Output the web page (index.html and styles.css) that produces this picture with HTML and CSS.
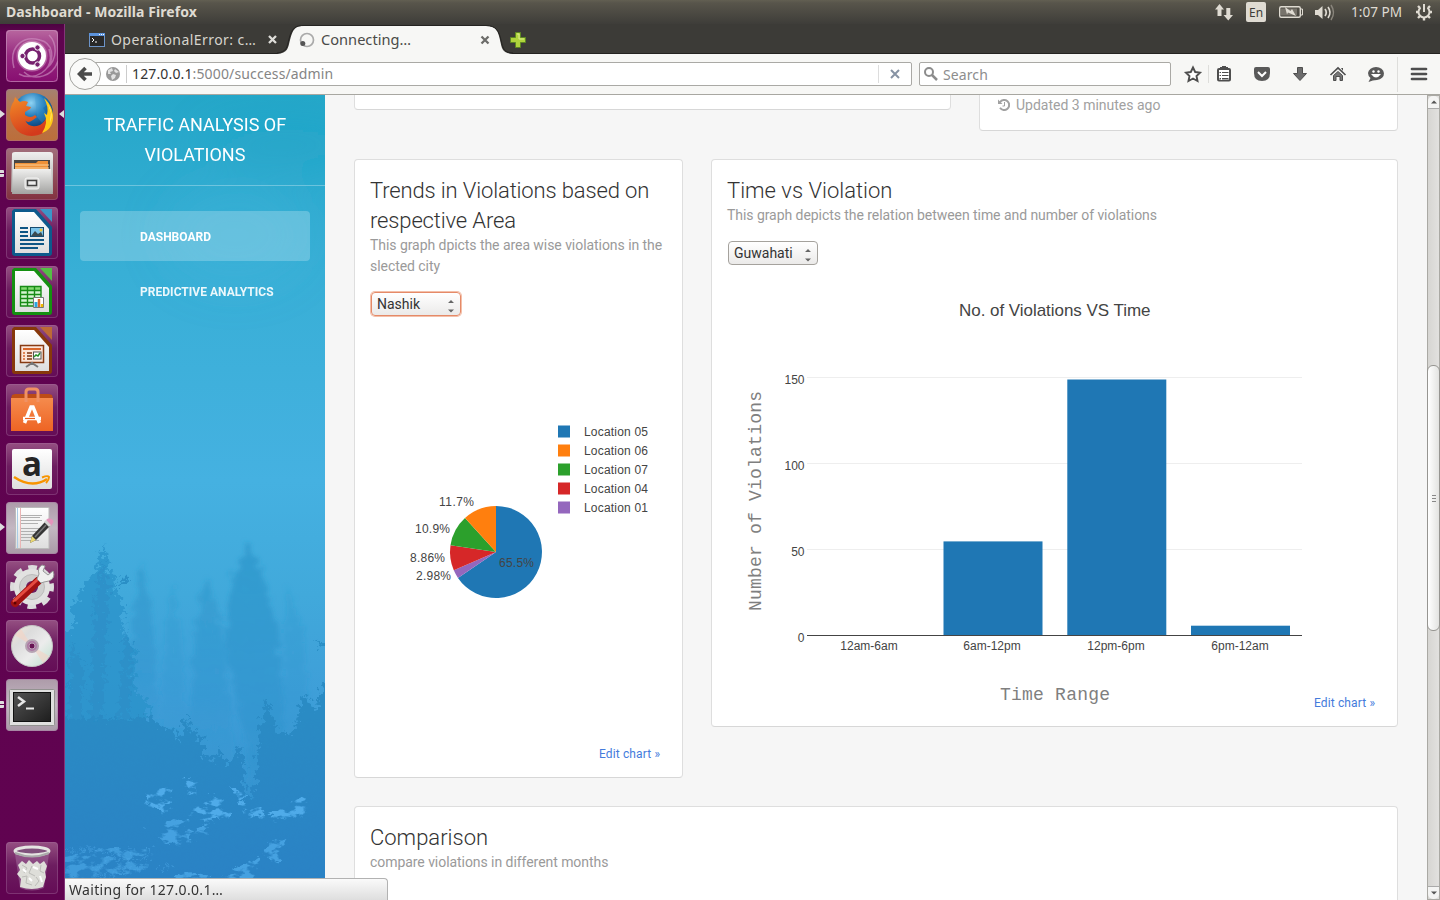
FILE: index.html
```html
<!DOCTYPE html>
<html lang="en">
<head>
<meta charset="utf-8">
<title>Dashboard - Mozilla Firefox</title>
<link rel="stylesheet" href="styles.css">
</head>
<body>
<svg class="defs" width="0" height="0" aria-hidden="true">
  <defs>
    <linearGradient id="silver" x1="0" y1="0" x2="0" y2="1"><stop offset="0" stop-color="#efefee"/><stop offset="1" stop-color="#a3a3a1"/></linearGradient>
    <linearGradient id="paper" x1="0" y1="0" x2="0" y2="1"><stop offset="0" stop-color="#fff"/><stop offset="1" stop-color="#dedede"/></linearGradient>
    <linearGradient id="orange" x1="0" y1="0" x2="0" y2="1"><stop offset="0" stop-color="#f58b4d"/><stop offset="1" stop-color="#ee6424"/></linearGradient>
    <linearGradient id="screen" x1="0" y1="0" x2="1" y2="1"><stop offset="0" stop-color="#535353"/><stop offset="1" stop-color="#1e1e1e"/></linearGradient>
    <radialGradient id="globe" cx=".45" cy=".25" r=".75"><stop offset="0" stop-color="#8fd4f4"/><stop offset=".45" stop-color="#2079b9"/><stop offset="1" stop-color="#062a60"/></radialGradient>
    <linearGradient id="fox" x1="0" y1="0" x2=".4" y2="1"><stop offset="0" stop-color="#f28c28"/><stop offset="1" stop-color="#d43a1c"/></linearGradient>
    <linearGradient id="swirl" x1="0" y1="0" x2="0" y2="1"><stop offset="0" stop-color="#b8669f"/><stop offset=".5" stop-color="#96287f"/><stop offset="1" stop-color="#870e70"/></linearGradient>
    <linearGradient id="disc" x1="0" y1="0" x2="1" y2="1"><stop offset="0" stop-color="#f5e7d6"/><stop offset=".3" stop-color="#dcdcdc"/><stop offset=".6" stop-color="#ececec"/><stop offset=".8" stop-color="#d3e6dc"/><stop offset="1" stop-color="#e5d8ea"/></linearGradient>
  </defs>
</svg>
<header class="panel">
  <span class="panel-title">Dashboard - Mozilla Firefox</span>
  <svg class="indicators" viewBox="1210 0 230 24" width="230" height="24">
    <g fill="#dfdbd2">
      <path d="M1215 9.500L1219.500 4L1224 9.500H1221.500V16H1217.500V9.500ZM1223.500 15H1226.300V8H1230.300V15H1233L1228.300 20.500Z"/>
      <rect x="1246" y="2" width="20" height="20" rx="2"/>
      <path d="M1281 8.500H1297V15.500H1281Z" fill="#77736b"/>
      <path d="M1285 7L1290.500 11L1292 9L1296 16L1288 12.500L1287 14.500Z"/>
      <rect x="1279.700" y="6.700" width="20.600" height="10.600" rx="1.500" fill="none" stroke="#dfdbd2" stroke-width="1.400"/>
      <path d="M1300.500 9H1302.500V15H1300.500" fill="none" stroke="#dfdbd2"/>
      <path d="M1315 10H1318L1322.500 6V19L1318 15H1315Z"/>
      <path d="M1325 9Q1327.500 12.500 1325 16M1328 7Q1332 12.500 1328 18" fill="none" stroke="#dfdbd2" stroke-width="1.700"/>
      <path d="M1331 5Q1336 12.500 1331 20" fill="none" stroke="#89857c" stroke-width="1.500"/>
      <text x="1249" y="17" class="ui" font-size="12" textLength="14" lengthAdjust="spacingAndGlyphs" fill="#3c3b37">En</text>
      <text x="1351" y="17" class="ui" font-size="14" textLength="51" lengthAdjust="spacingAndGlyphs">1:07 PM</text>
    </g>
    <g stroke="#dfdbd2" fill="none" stroke-width="2">
      <path d="M1420.500 7.800A5.500 5.500 0 1 0 1427.500 7.800M1424 4V12"/>
      <path d="M1418 6L1420 8M1430 6L1428 8M1416 12H1418.500M1429.500 12H1432M1418 18L1420.500 15.500M1430 18L1427.500 15.500M1424 17V20.500" stroke-width="2.400"/>
    </g>
  </svg>
</header>
<div class="desktop">
  <nav class="launcher">
    <a class="tile"><svg viewBox="0 0 52 52" width="52" height="52"><rect width="52" height="52" rx="4" fill="url(#swirl)"/><path d="M8 38C2 16 18 5 34 10C47 13 49 28 41 38C52 29 51 13 43 5M43 19C50 41 27 52 13 44M18 42C29 52 47 46 52 31" fill="none" stroke="#d196c5" stroke-width="1.500" opacity=".6"/><circle cx="26" cy="26" r="15.500" fill="#e9c6df" opacity=".4"/><circle cx="26" cy="26" r="14" fill="#fff"/><circle cx="26.500" cy="26" r="7" fill="none" stroke="#77216f" stroke-width="3.500"/><g fill="#77216f" stroke="#fff"><circle cx="16.500" cy="26" r="2.700"/><circle cx="31.500" cy="17.500" r="2.700"/><circle cx="31.500" cy="34.500" r="2.700"/></g><rect x=".5" y=".5" width="51" height="51" rx="4" fill="none" stroke="#c58bb9" opacity=".7"/></svg></a>
    <a class="tile tan run active"><svg viewBox="0 0 52 52" width="52" height="52"><circle cx="27" cy="24" r="20" fill="url(#globe)"/><path d="M29 8C34 6 40 10 42 15L37 19L42 27L36 34L31 28Z" fill="#3d9bd1" opacity=".35"/><path d="M42 15C46 23 46 29 44 36C38 49 18 51 9 39C2 30 3 19 8 12L9 8L14 13Q18 11 22 13L20 17L25 18L24 20L19 23V26Q25 30 29 26L31 28L27 31C23 34 20 33 19 31Q23 40 34 36C41 32 43 23 42 15Z" fill="url(#fox)"/><path d="M38 9C51 20 50 40 36 44Q43 33 38 24L41 26Q43 18 38 9Z" fill="#ffc917"/><path d="M42 15Q48 25 44 34L45 24Z" fill="#fff18c"/></svg></a>
    <a class="tile red run2"><svg viewBox="0 0 52 52" width="52" height="52"><path d="M6 6Q6 4 9 4H44Q47 4 47 7V44H5Z" fill="url(#silver)"/><rect x="8" y="12" width="36" height="12" fill="#4a4744"/><path d="M9 15H30L32 13H42V24H9Z" fill="#ee9138"/><path d="M9 17H43M9 20H43" stroke="#fbd199"/><path d="M7 21H45L47 46H6Z" fill="url(#silver)"/><rect x="19" y="30" width="14" height="11" rx="2" fill="#d9d9d7" stroke="#f5f5f5"/><rect x="21.500" y="32.500" width="9" height="5" fill="#ececec" stroke="#424242" stroke-width="1.500"/></svg></a>
    <a class="tile"><svg viewBox="0 0 52 52" width="52" height="52"><path d="M8 2H30L46 20V46Q46 49 43 49H9Q6 49 6 46V4Z" fill="#0d5a8c"/><path d="M34 2H46V15Z" fill="#3b96c8"/><path d="M9 5H28L43 22V46H9Z" fill="url(#paper)"/><path d="M14 21H22M14 25H22M14 29H22M14 33H38M14 37H38M14 41H32" stroke="#0e5584" stroke-width="2"/><rect x="24.500" y="20.500" width="13" height="9" fill="#7cc4ea" stroke="#174c70"/><path d="M25 29L29 24L32 27L35 25L37 29Z" fill="#3c4a50"/><circle cx="35" cy="23" r="1.500" fill="#f1c232"/></svg></a>
    <a class="tile"><svg viewBox="0 0 52 52" width="52" height="52"><path d="M8 2H30L46 20V46Q46 49 43 49H9Q6 49 6 46V4Z" fill="#159011"/><path d="M34 2H46V15Z" fill="#54bf45"/><path d="M9 5H28L43 22V46H9Z" fill="url(#paper)"/><path d="M14 20H35V40H14Z" fill="#d4f4d1"/><path d="M14 20H35V24H14Z" fill="#83da70"/><path d="M14.500 20.500H35V40H14.500ZM14 24.500H35M14 28.500H35M14 32.500H35M14 36.500H35M21.500 20V40M28.500 20V40" fill="none" stroke="#178b15" stroke-width="1.400"/><path d="M27.500 31.500H37.500V41.500H27.500Z" fill="#fff" stroke="#777"/><path d="M30 41V36" stroke="#29a6e0" stroke-width="3"/><path d="M33 41V33" stroke="#dd6628" stroke-width="2.500"/><path d="M36 41V38" stroke="#f1b900" stroke-width="2.500"/></svg></a>
    <a class="tile"><svg viewBox="0 0 52 52" width="52" height="52"><path d="M8 2H30L46 20V46Q46 49 43 49H9Q6 49 6 46V4Z" fill="#87380b"/><path d="M34 2H46V15Z" fill="#bd6a36"/><path d="M9 5H28L43 22V46H9Z" fill="url(#paper)"/><rect x="14.500" y="20.500" width="23" height="17" fill="#fbe5d9" stroke="#873b13" stroke-width="1.500"/><path d="M17 24H35" stroke="#d8662b" stroke-width="2"/><path d="M17 28H19M17 31H19M17 34H19" stroke="#d8662b" stroke-width="1.700"/><path d="M21 28H26M21 31H26M21 34H26" stroke="#7c3310" stroke-width="1.700"/><rect x="27.500" y="27" width="7.500" height="7" fill="#fff" stroke="#555"/><path d="M28 32L30 30L32 31L34 28" fill="none" stroke="#25922a" stroke-width="1.500"/><path d="M20 42L26 38L32 42M26 37V40" fill="none" stroke="#777" stroke-width="2"/></svg></a>
    <a class="tile"><svg viewBox="0 0 52 52" width="52" height="52"><path d="M6 11L9 10H43L46 11L47 15H5Z" fill="#bd4c16"/><path d="M5 14H47V47H5Z" fill="url(#orange)"/><path d="M20 18V8Q20 5 23 5H29Q32 5 32 8V18" fill="none" stroke="#f09164" stroke-width="3"/><path d="M18.500 39L25 23H27L33.500 39M17 34.500H35" fill="none" stroke="#fff" stroke-width="3.500"/><path d="M19 34.500H29" stroke="#eb5f1f" stroke-width="1.200"/></svg></a>
    <a class="tile"><svg viewBox="0 0 52 52" width="52" height="52"><rect x="6" y="6" width="40" height="40" rx="2" fill="url(#paper)"/><text x="16" y="33" class="amazon" textLength="20" lengthAdjust="spacingAndGlyphs">a</text><path d="M8 34Q26 46 41 36" fill="none" stroke="#f79400" stroke-width="2.500"/><path d="M36 34.500Q42 32 43 34Q43 37 40 40" fill="none" stroke="#f79400" stroke-width="2"/></svg></a>
    <a class="tile gray run"><svg viewBox="0 0 52 52" width="52" height="52"><path d="M9.500 5.500H43V46.500H9.500Z" fill="url(#paper)" stroke="#bbb"/><path d="M15 13.500H36M15 15.500H34M15 18.500H36M15 21.500H32M15 26.500H36M15 29.500H32M15 32.500H34M15 35.500H30M15 38.500H33" stroke="#b0b0b0"/><path d="M11.500 6V46" stroke="#a9cce5"/><path d="M14.500 6V46" stroke="#eab5b5"/><path d="M24 41L26 34L39 20L44 24L30 38Z" fill="#353535"/><path d="M40 18L42 16.500Q47 16 47.500 20L45 24Z" fill="#e594bd"/><path d="M38 20L40 18L45 23L43 25Z" fill="#d4d4d4"/><path d="M24 41L26 34L30 38Z" fill="#ead773"/><path d="M29 35L40 23" stroke="#777" stroke-width="1.500"/></svg></a>
    <a class="tile"><svg viewBox="0 0 52 52" width="52" height="52"><circle cx="26" cy="26" r="19" fill="none" stroke="#dcdcdc" stroke-width="6" stroke-dasharray="8.500 6.420" stroke-dashoffset="4.250"/><circle cx="26" cy="26" r="11.500" fill="none" stroke="#e2e2e1" stroke-width="13"/><circle cx="26" cy="26" r="12.500" fill="#cfcfce" stroke="#bbb"/><circle cx="26" cy="26" r="6" fill="#6d1d60"/><path d="M9 42L32 20" stroke="#a11111" stroke-width="8" stroke-linecap="round"/><path d="M8 40L31 19" stroke="#e54b40" stroke-width="3" stroke-linecap="round"/><path d="M31 18L33 13Q31 7 36 4L39 5L37 10L42 14L47 10Q50 17 43 20L38 21L35 22Z" fill="#f0f0ef" stroke="#999"/><circle cx="9" cy="42" r="1.500" fill="#5c0000"/></svg></a>
    <a class="tile"><svg viewBox="0 0 52 52" width="52" height="52"><circle cx="26" cy="26" r="20.500" fill="url(#disc)" stroke="#c5c5c5"/><path d="M26 26L9 15L15 9ZM26 26L37 43L43 36Z" fill="#f2d4c6" opacity=".65"/><circle cx="26" cy="26" r="6" fill="#ad7aa5" stroke="#b6a4b3" stroke-width="2"/><circle cx="26" cy="26" r="3" fill="#681554" stroke="#bda4b9"/></svg></a>
    <a class="tile gray run2"><svg viewBox="0 0 52 52" width="52" height="52"><rect x="3.500" y="10.500" width="45" height="36" rx="1" fill="#e0e0df" stroke="#929290"/><rect x="7.500" y="13.500" width="37" height="29" fill="url(#screen)" stroke="#111"/><path d="M12 18L18 22.500L12 27" fill="none" stroke="#e8e8e8" stroke-width="2.500"/><path d="M20 29.500H28" stroke="#e8e8e8" stroke-width="2"/></svg></a>
    <a class="tile trash"><svg viewBox="0 0 52 52" width="52" height="52"><path d="M9 12L14 46Q26 51 38 46L43 12Z" fill="#aa7aa7" opacity=".45"/><path d="M12 23L16 19L20 22L23 18L27 22L31 19L34 22L38 19L41 24L39 30L40 35L37 45Q26 49 14 45L15 37L11 32L14 28Z" fill="#deded9"/><path d="M16 23L21 26L18 31M26 24L23 31L29 34M35 23L34 29L38 31M16 35L21 34L20 41L26 43M30 35L33 39L29 44" fill="none" stroke="#bcbcb8"/><path d="M17 27L20 30M27 25L32 27M23 36L26 39M34 34L36 40" stroke="#fff" stroke-width="2"/><ellipse cx="26" cy="9" rx="17" ry="4" fill="#80517c" stroke="#e5e5e2" stroke-width="3"/><path d="M9 11Q26 18 43 11" fill="none" stroke="#aaa" stroke-width="2"/></svg></a>
  </nav>
  <div class="browser">
    <div class="tabs">
      <div class="tab">
        <svg width="16" height="14" viewBox="0 0 16 14"><rect x=".5" y=".5" width="15" height="13" fill="#292929" stroke="#6d94c8"/><path d="M0 0H16V3H0Z" fill="#5c93dc"/><path d="M10 1.500H11M12 1.500H13M14 1.500H15" stroke="#fff"/><path d="M3 5L5 7L3 9M6 9H8" fill="none" stroke="#fff"/></svg>
        <span class="tab-label">OperationalError: c…</span>
        <svg class="close" width="9" height="9" viewBox="0 0 9 9"><path d="M1 1L8 8M8 1L1 8" stroke="#deddd9" stroke-width="2.300"/></svg>
      </div>
      <svg class="tab-shape" viewBox="277 24 236 30" width="236" height="30">
        <path d="M277 54C288 53 288 48 290 40C293 28 296 26 304 26H486C496 26 498 31 500 40C502 49 502 53 513 54Z" fill="#f7f7f5"/>
        <path d="M277 53C287 52 287 47 289 39C292 27 296 25.500 304 25.500H486C496 25.500 499 31 501 40C503 49 504 52.500 513 53" fill="none" stroke="#242321"/>
        <circle cx="307" cy="40" r="6.500" fill="none" stroke="#aaa" stroke-width="1.700"/><circle cx="302.800" cy="43.500" r="2.500" fill="#555"/>
        <text x="321" y="45" class="ui" font-size="14" textLength="90" lengthAdjust="spacingAndGlyphs" fill="#4b4b48">Connecting…</text>
        <path d="M481.500 36.500L488.500 43.500M488.500 36.500L481.500 43.500" stroke="#6c6c69" stroke-width="2.300"/>
      </svg>
      <svg class="plus" viewBox="0 0 16 16" width="16" height="16"><path d="M5.500 .5H10.500V5.500H15.500V10.500H10.500V15.500H5.500V10.500H.5V5.500H5.500Z" fill="#b0d43c" stroke="#5d8623"/><path d="M7 2H9V7H14" fill="none" stroke="#dceb91"/></svg>
    </div>
    <div class="toolbar">
      <div class="back"><svg viewBox="0 0 16 16" width="16" height="16"><path d="M8.500 2L2.500 8L8.500 14M3 8H15" fill="none" stroke="#4b4b4b" stroke-width="3.600"/></svg></div>
      <div class="url">
        <svg viewBox="0 0 14 14" width="14" height="14"><circle cx="7" cy="7" r="7" fill="#999"/><path d="M2 3L6 1L7 4L4 5L5 7L2 7ZM7 7L10 8L9 11L6 13L5 9ZM9 2L13 5L10 6L8 4Z" fill="#e2e2e2"/></svg>
        <span class="address"><b>127.0.0.1</b>:5000/success/admin</span>
        <span class="stop"><svg viewBox="0 0 10 10" width="10" height="10"><path d="M1 1L9 9M9 1L1 9" stroke="#8793a4" stroke-width="2"/></svg></span>
      </div>
      <div class="search"><svg viewBox="0 0 14 14" width="14" height="14"><circle cx="5" cy="5" r="4" fill="none" stroke="#8c8c8c" stroke-width="2"/><path d="M8 8L13 13" stroke="#8c8c8c" stroke-width="2.500"/></svg><span>Search</span></div>
      <svg class="tools" viewBox="1171 54 269 40" width="269" height="40">
        <path d="M1193 67.500L1195.200 72L1200 72.600L1196.500 76L1197.500 81L1193 78.500L1188.500 81L1189.500 76L1186 72.600L1190.800 72Z" fill="#fff" stroke="#4e4e4e" stroke-width="1.900"/>
        <path d="M1208.500 65V83M1397.500 57V92" stroke="#dededb"/>
        <rect x="1218" y="69" width="12" height="11.500" rx="1" fill="#fff" stroke="#4e4e4e" stroke-width="2"/><path d="M1220 69V67H1222V66H1226V67H1228V69Z" fill="#4e4e4e"/><path d="M1219.500 72.500H1228.500M1219.500 75.500H1228.500M1219.500 78.500H1228.500" stroke="#4e4e4e"/><path d="M1221.500 71V80" stroke="#fff"/>
        <path d="M1254 69Q1254 67 1256 67H1268Q1270 67 1270 69V73Q1270 81 1262 81Q1254 81 1254 73Z" fill="#595959"/><path d="M1258 72L1262 76L1266 72" fill="none" stroke="#fff" stroke-width="2"/>
        <path d="M1297.500 67.500H1302.500V73.500H1306.500L1300 80.500L1293.500 73.500H1297.500Z" fill="#6c6c6c" stroke="#4e4e4e"/>
        <path d="M1330.500 75L1338 68L1345.500 75" fill="none" stroke="#4e4e4e" stroke-width="1.700"/><path d="M1333.500 75.500L1338 71.500L1342.500 75.500V80.500H1340V76.500H1336V80.500H1333.500Z" fill="#777" stroke="#4e4e4e"/><path d="M1341 68H1343V71" fill="#4e4e4e"/>
        <path d="M1368 73A8 6.500 0 1 1 1377 80Q1373 80 1368.500 82L1370.500 78Q1368 76 1368 73Z" fill="#595959"/><circle cx="1373.500" cy="71.500" r="1.200" fill="#fff"/><circle cx="1378.500" cy="71.500" r="1.200" fill="#fff"/><path d="M1371 74H1381Q1376 81 1371 74" fill="#fff"/>
        <path d="M1412 69H1426M1412 74H1426M1412 79H1426" stroke="#4e4e4e" stroke-width="2.700" stroke-linecap="round"/>
      </svg>
    </div>
    <div class="viewport">
      <aside class="sidebar">
        <svg class="scene" viewBox="0 0 260 805" width="260" height="805" aria-hidden="true">
          <defs>
            <linearGradient id="sky" x1="0" y1="0" x2="0" y2="1"><stop offset="0" stop-color="#25a7c9"/><stop offset=".22" stop-color="#38afd6"/><stop offset=".48" stop-color="#45b1e1"/><stop offset=".62" stop-color="#41a9db"/><stop offset=".75" stop-color="#3e9ed8"/><stop offset=".85" stop-color="#3796d2"/><stop offset="1" stop-color="#2c83c6"/></linearGradient>
            <linearGradient id="ground" x1="0" y1="620" x2="0" y2="805" gradientUnits="userSpaceOnUse"><stop offset="0" stop-color="#298bc4"/><stop offset="1" stop-color="#2b81c5"/></linearGradient>
            <linearGradient id="fade" x1="0" y1="0" x2="0" y2="1"><stop offset="0" stop-color="#2991c6"/><stop offset=".6" stop-color="#2c91cb" stop-opacity=".8"/><stop offset="1" stop-color="#3090cc" stop-opacity="0"/></linearGradient>
            <filter id="rough" x="-10%" y="-10%" width="120%" height="120%"><feTurbulence type="fractalNoise" baseFrequency=".2" numOctaves="4" seed="7"/><feDisplacementMap in="SourceGraphic" scale="18" xChannelSelector="R" yChannelSelector="G"/><feGaussianBlur stdDeviation=".5"/></filter>
            <filter id="mist" x="-30%" y="-20%" width="160%" height="140%"><feTurbulence type="fractalNoise" baseFrequency=".13" numOctaves="4" seed="3"/><feDisplacementMap in="SourceGraphic" scale="16" xChannelSelector="R" yChannelSelector="G"/><feGaussianBlur stdDeviation="2"/></filter>
            <filter id="rocks" x="-20%" y="-40%" width="140%" height="180%"><feTurbulence type="fractalNoise" baseFrequency=".07 .13" numOctaves="4" seed="11" result="n"/><feColorMatrix in="n" values="0 0 0 0 0  0 0 0 0 0  0 0 0 0 0  0 7 0 0 -3.300" result="m"/><feDisplacementMap in="SourceGraphic" in2="n" scale="18" xChannelSelector="R" yChannelSelector="G" result="d"/><feComposite in="d" in2="m" operator="in"/><feGaussianBlur stdDeviation=".7"/></filter>
            <filter id="haze" x="-40%" y="-40%" width="180%" height="180%"><feGaussianBlur stdDeviation="22"/></filter>
          </defs>
          <rect width="260" height="805" fill="url(#sky)"/>
          <g filter="url(#haze)"><ellipse cx="220" cy="50" rx="80" ry="18" fill="#1c9fc4" opacity=".4"/><ellipse cx="170" cy="140" rx="70" ry="50" fill="#46b9df" opacity=".25"/></g>
          <g filter="url(#mist)" fill="url(#fade)">
            <path d="M77 467L88 520L94 650H62L68 520Z" opacity=".5"/>
            <path d="M108 488L116 540L124 660H94L100 540Z" opacity=".25"/>
            <path d="M142 484L158 535L170 680H122L130 535Z" opacity=".45"/>
            <path d="M184 448L190 462L199 485L213 535L222 665L207 750H190L182 650L160 550L167 485Z" opacity=".6"/>
            <path d="M222 490L238 535L250 680H215Z" opacity=".25"/>
          </g>
          <g filter="url(#rough)">
            <path d="M39 448L44 475L52 482L48 496L59 508L56 535L72 555L68 590L84 610L78 660H-10V540L8 535L8 510L18 490L28 480Z" fill="#2b92c9" opacity=".72"/>
            <path d="M57 484L65 483L53 493ZM250 545L265 550L257 552Z" fill="#2a8fc6"/>
            <path d="M30 500L38 465L44 500L36 640H24ZM60 530L66 550L64 640H52ZM6 545L18 570V640H4Z" fill="#268ac3" opacity=".45"/>
            <path d="M-12 625L35 622L57 626L80 620L100 634L107 632L113 650L118 630L121 620L127 636L138 645L138 660L148 667L154 652L159 668L166 668L174 649L180 668L178 690L184 705L191 690L193 645L201 603L207 618L212 636L224 640L230 632L238 600L244 603L250 618L258 590L275 570V825H-12Z" fill="url(#ground)"/>
          </g>
          <g filter="url(#rocks)" fill="#4fabe9">
            <path d="M82 697L105 693L100 722L84 710ZM114 684L133 686L130 702ZM123 718L145 699L164 707L163 724L140 728ZM165 695L185 701L178 709ZM172 709L197 713L201 725L180 724ZM205 720L230 704L245 708L236 722L210 729Z"/>
            <path d="M83 734L110 724L124 729L128 751L102 752ZM128 738L148 728L142 742ZM198 765L205 747L219 743L212 771Z" opacity=".75"/>
            <path d="M-10 761L35 754H90L84 763L45 778L70 768L82 770L76 780L-10 787Z" opacity=".6"/>
            <path d="M87 799L125 779L155 786L192 764L190 790L205 805H80Z" opacity=".75"/>
          </g>
          <path d="M0 757Q25 753 42 757T71 753M30 774Q47 761 66 765T85 751M32 782Q62 773 78 774M90 773L109 771" fill="none" stroke="#4ba6e6" stroke-width="1.500" opacity=".45" filter="url(#rough)"/>
        </svg>
        <h1>TRAFFIC ANALYSIS OF<br>VIOLATIONS</h1>
        <ul><li class="current">DASHBOARD</li><li>PREDICTIVE ANALYTICS</li></ul>
      </aside>
      <main>
        <div class="row row-top">
          <section class="card cut-a"></section>
          <section class="card cut-b"><svg viewBox="0 0 12 12" width="12" height="12"><path d="M2 3.300A5 5 0 1 1 2 8.800" fill="none" stroke="#a1a1a1" stroke-width="2"/><path d="M0 .5V5H4.500Z" fill="#a1a1a1"/><path d="M6.500 3V7H4.500" fill="none" stroke="#a1a1a1"/></svg><span>Updated 3 minutes ago</span></section>
        </div>
        <div class="row row-charts">
          <section class="card">
            <h2 class="tight">Trends in Violations based on respective Area</h2>
            <p>This graph dpicts the area wise violations in the slected city</p>
            <div class="select focus"><span>Nashik</span><svg viewBox="0 0 6 14" width="6" height="14"><path d="M0 4L3 1L6 4ZM0 10.500L3 13.500L6 10.500Z" fill="#666"/></svg></div>
            <svg class="plot" viewBox="370 317 297 460" width="297" height="460">
              <path d="M496 552V506A46 46 0 1 1 457.960 577.900Z" fill="#1f77b4"/>
              <path d="M496 552L457.960 577.900A46 46 0 0 1 453.800 570.300Z" fill="#9467bd"/>
              <path d="M496 552L453.800 570.300A46 46 0 0 1 450.500 545.300Z" fill="#d62728"/>
              <path d="M496 552L450.500 545.300A46 46 0 0 1 465 518Z" fill="#2ca02c"/>
              <path d="M496 552L465 518A46 46 0 0 1 496 506Z" fill="#ff7f0e"/>
              <g class="chart-text">
                <text x="439" y="506" textLength="35">11.7%</text><text x="415" y="533" textLength="35">10.9%</text><text x="410" y="562" textLength="35">8.86%</text><text x="416" y="580" textLength="35">2.98%</text><text x="499" y="567" textLength="35">65.5%</text>
                <text x="584" y="436" textLength="64">Location 05</text><text x="584" y="455" textLength="64">Location 06</text><text x="584" y="474" textLength="64">Location 07</text><text x="584" y="493" textLength="64">Location 04</text><text x="584" y="512" textLength="64">Location 01</text>
              </g>
              <rect x="558" y="425.500" width="12" height="12" fill="#1f77b4"/><rect x="558" y="444.500" width="12" height="12" fill="#ff7f0e"/><rect x="558" y="463.500" width="12" height="12" fill="#2ca02c"/><rect x="558" y="482.500" width="12" height="12" fill="#d62728"/><rect x="558" y="501.500" width="12" height="12" fill="#9467bd"/>
              <text class="edit" x="599" y="758" textLength="61">Edit chart »</text>
            </svg>
          </section>
          <section class="card">
            <h2>Time vs Violation</h2>
            <p>This graph depicts the relation between time and number of violations</p>
            <div class="select"><span>Guwahati</span><svg viewBox="0 0 6 14" width="6" height="14"><path d="M0 4L3 1L6 4ZM0 10.500L3 13.500L6 10.500Z" fill="#666"/></svg></div>
            <svg class="plot" viewBox="727 266 655 460" width="655" height="460">
              <text x="959" y="316" class="chart-title" textLength="191.500">No. of Violations VS Time</text>
              <path d="M807 377.500H1302M807 463.500H1302M807 549.500H1302" stroke="#eee"/>
              <g fill="#1f77b4"><rect x="943.500" y="541.400" width="99" height="94.100"/><rect x="1067.300" y="379.500" width="99" height="256"/><rect x="1191" y="625.700" width="99" height="9.800"/></g>
              <path d="M807 635.500H1302" stroke="#444"/>
              <g class="chart-text">
                <g text-anchor="end"><text x="804.500" y="384">150</text><text x="804.500" y="470">100</text><text x="804.500" y="556">50</text><text x="804.500" y="642">0</text></g>
                <g text-anchor="middle"><text x="869" y="650">12am-6am</text><text x="992" y="650">6am-12pm</text><text x="1116" y="650">12pm-6pm</text><text x="1240" y="650">6pm-12am</text></g>
              </g>
              <g class="axis"><text x="1000" y="700" textLength="110">Time Range</text><text transform="translate(761 611) rotate(-90)" textLength="220">Number of Violations</text></g>
              <text class="edit" x="1314" y="707" textLength="61">Edit chart »</text>
            </svg>
          </section>
        </div>
        <section class="card comparison"><h2>Comparison</h2><p>compare violations in different months</p></section>
      </main>
      <div class="scrollbar">
        <div class="step up"><svg viewBox="0 0 6 4" width="6" height="4"><path d="M0 3.500L3 .5L6 3.500Z" fill="#555"/></svg></div>
        <div class="thumb"><i></i><i></i><i></i></div>
        <div class="step down"><svg viewBox="0 0 6 4" width="6" height="4"><path d="M0 .5L3 3.500L6 .5Z" fill="#555"/></svg></div>
      </div>
      <div class="status"><span>Waiting for 127.0.0.1…</span></div>
    </div>
  </div>
</div>
</body>
</html>
```
FILE: styles.css
```css
* { box-sizing: border-box; }
body { margin: 0; width: 1440px; height: 900px; overflow: hidden; display: flex; flex-direction: column; font-family: Roboto, sans-serif; }
svg { display: block; flex: none; }
.defs { position: absolute; }
.ui, .panel, .tabs, .toolbar, .status { font-family: "Noto Sans", sans-serif; }

.panel { height: 24px; flex: none; display: flex; justify-content: space-between; align-items: center; padding-left: 6px; background: linear-gradient(#625f52, #58554b 3px, #3e3d39); color: #dfdbd2; }
.panel-title { font-size: 14px; line-height: 22px; font-weight: 700; letter-spacing: .08px; white-space: nowrap; }

.desktop { flex: 1; min-height: 0; display: flex; }
.launcher { width: 65px; flex: none; padding: 6px 0 6px 6px; display: flex; flex-direction: column; gap: 7px; background: linear-gradient(#4c0341, #5f034f 8px, #600350); border-right: 1px solid #843479; }
.tile { position: relative; width: 52px; height: 52px; border-radius: 4px; background: linear-gradient(#955082, #6d1d60 45%, #640c56); box-shadow: inset 0 0 0 1px #a46c9d66; }
.tile.tan { background: linear-gradient(#a58271, #b9744a 50%, #bb6e3b); }
.tile.red { background: linear-gradient(#a16e7b, #82313f); }
.tile.gray { background: linear-gradient(#ad9ba9, #c3b7c2 50%, #a99aa7); }
.trash { margin-top: auto; }
.run::before, .active::after { content: ""; position: absolute; top: 21px; border: 4px solid transparent; border-width: 4px 5px; }
.run::before { left: -6px; border-left-color: #ddd; border-right: 0; }
.active::after { right: -6px; border-right-color: #ddd; border-left: 0; }
.run2::before { content: ""; position: absolute; left: -6px; top: 22px; width: 4px; height: 7px; background: linear-gradient(#ddd 3px, transparent 3px 4px, #ddd 4px); border-radius: 0 1px 1px 0; }
.amazon { font: 700 34px "Open Sans", sans-serif; fill: #252525; }

.browser { flex: 1; min-width: 0; display: flex; flex-direction: column; }
.tabs { height: 30px; flex: none; display: flex; background: #3c3b37; box-shadow: inset 0 -1px #242321; }
.tab { width: 212px; padding: 1px 0 0 24px; display: flex; align-items: center; color: #d6d4cd; font-size: 14px; }
.tab-label { width: 153px; margin-left: 6px; white-space: nowrap; letter-spacing: .43px; }
.close { margin-left: 6px; }
.plus { margin: 8px 0 0 -3px; }
.toolbar { height: 41px; flex: none; display: flex; align-items: center; padding-left: 4px; background: #f7f7f5; border-bottom: 1px solid #a8a7a1; font-size: 14px; }
.back { width: 32px; height: 32px; flex: none; z-index: 1; display: grid; place-items: center; border: 1px solid #a1a19d; border-radius: 50%; background: #fafaf9; }
.url, .search { height: 24px; display: flex; align-items: center; border: 1px solid #aaa9a5; border-radius: 2px; background: #fff; }
.url { width: 819px; margin-left: -8px; padding-left: 12px; }
.address { flex: 1; margin-left: 6px; padding-left: 5px; border-left: 1px solid #ccc; line-height: 18px; letter-spacing: .14px; color: #858585; white-space: nowrap; }
.address b { color: #333; font-weight: 400; }
.stop { padding: 4px 11px; border-left: 1px solid #ddd; }
.search { width: 252px; margin-left: 7px; padding-left: 4px; color: #8d8d8d; }
.search span { margin-left: 5px; letter-spacing: .1px; }

.viewport { position: relative; flex: 1; min-height: 0; display: flex; background: #f6f6f6; overflow: hidden; }
.sidebar { position: relative; width: 260px; flex: none; color: #fff; }
.scene { position: absolute; inset: 0; overflow: hidden; }
.sidebar h1, .sidebar ul { position: relative; }
.sidebar h1 { height: 91px; margin: 0; padding-top: 15px; border-bottom: 1px solid #ffffff4d; font-size: 18px; line-height: 30px; font-weight: 400; text-align: center; }
.sidebar ul { list-style: none; margin: 25px 15px 0; padding: 0; display: grid; gap: 5px; }
.sidebar li { height: 50px; padding-left: 60px; line-height: 53px; border-radius: 4px; font-size: 12px; font-weight: 700; letter-spacing: .03px; opacity: .9; }
.sidebar .current { background: #ffffff3b; letter-spacing: 0; opacity: 1; }

main { width: 1102px; flex: none; padding: 0 29px; }
.row { display: grid; align-items: start; column-gap: 28px; }
.row-top { grid-template-columns: 597px 419px; height: 64px; }
.row-charts { grid-template-columns: 329px 687px; height: 647px; }
.card { min-width: 0; padding: 16px 15px 0; background: #fff; border: 1px solid #dedede; border-bottom-color: #d7d7d7; border-radius: 4px; overflow: hidden; }
.cut-a, .cut-b { border-top: 0; border-radius: 0 0 4px 4px; }
.cut-a { height: 15px; padding: 0; }
.cut-b { height: 36px; display: flex; align-items: center; gap: 6px; padding: 0 0 16px 18px; color: #a1a1a1; font-size: 14px; }
.card h2 { margin: 0; color: #333; font-size: 22px; line-height: 30px; font-weight: 300; }
.card h2.tight { letter-spacing: -.14px; }
.card p { margin: -1px 0 0; color: #9a9a9a; font-size: 14px; line-height: 21px; letter-spacing: -.055px; font-weight: 400; }
.select { width: 90px; height: 24px; margin: 15px 0 1px 1px; padding: 0 6px 0 5px; display: flex; align-items: center; justify-content: space-between; border: 1px solid #a5a29d; border-radius: 4px; background: linear-gradient(#fff, #ebeae9); font-size: 14px; line-height: 22px; color: #333; }
.select svg { margin-top: 3px; }
.select.focus { border-color: #e58a68; box-shadow: 0 0 0 1px #f3c0aa; }
.plot { overflow: visible; }
.chart-text, .chart-title { font-family: "Liberation Sans", Arial, sans-serif; fill: #444; }
.chart-text { font-size: 12px; }
.chart-title { font-size: 17px; }
.axis { font: 18px "Liberation Mono", monospace; fill: #7f7f7f; }
.edit { font: 12px Roboto, sans-serif; fill: #447bdc; }
.comparison { height: 130px; }

.scrollbar { width: 13px; flex: none; display: flex; flex-direction: column; background: linear-gradient(90deg, #d6d5d2, #e2e1df); border: 1px solid #aaa9a4; }
.step { height: 13px; display: grid; place-items: center; background: #f4f4f3; border-radius: 5px 5px 0 0; border-bottom: 1px solid #aaa; }
.thumb { height: 266px; margin: 256px -1px 0; display: flex; flex-direction: column; align-items: center; justify-content: center; gap: 2px; border: 1px solid #969591; border-radius: 6px; background: linear-gradient(90deg, #fff, #e3e3e1); }
.thumb i { width: 4px; height: 1px; background: #888; }
.down { margin-top: auto; border-radius: 0 0 5px 5px; border-bottom: 0; border-top: 1px solid #aaa; }
.status { position: absolute; left: 0; bottom: 0; width: 323px; height: 22px; padding-left: 4px; border: 1px solid #b2b2b2; border-width: 1px 1px 0 0; border-radius: 0 4px 0 0; background: linear-gradient(#fafafa, #dedede); color: #333; font-size: 14px; line-height: 21px; letter-spacing: .33px; }
```
